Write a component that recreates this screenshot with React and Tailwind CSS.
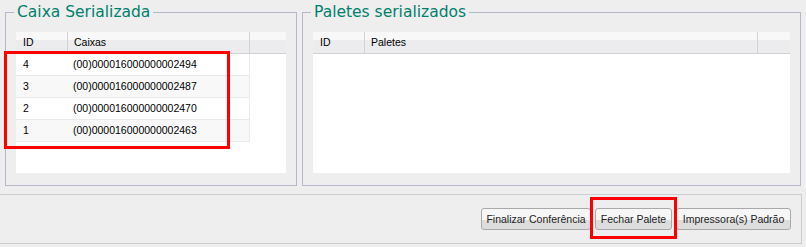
const caixas = [
  { id: 4, code: '(00)000016000000002494' },
  { id: 3, code: '(00)000016000000002487' },
  { id: 2, code: '(00)000016000000002470' },
  { id: 1, code: '(00)000016000000002463' },
];

function Group({ title, width, children }) {
  return (
    <fieldset className={`${width} h-[183px] border border-[#b5b7cc] px-[10px] pb-[11px]`}>
      <legend className="-ml-[2px] px-[3px] font-['DejaVu_Sans'] text-[15.5px] leading-[18px] text-[#00806c]">
        {title}
      </legend>
      {children}
    </fieldset>
  );
}

function HeaderCell({ children, className }) {
  return (
    <div className={`h-full flex items-center border-r border-[#d3d3d6] ${className}`}>
      {children}
    </div>
  );
}

function Button({ children, width }) {
  return (
    <button className={`${width} h-[22px] rounded-[3px] border border-[#a9a9a9] bg-[linear-gradient(#f6f6f6_0_55%,#dddddd_55%)] text-[#222] leading-none`}>
      {children}
    </button>
  );
}

export default function App() {
  return (
    <div className="relative w-[806px] h-[247px] overflow-hidden bg-[#eeeeee] font-['Liberation_Sans',Arial,sans-serif] text-[10.5px] text-black">
      <div className="flex gap-[5px] pl-[5px] pt-[3px]">
        <Group title="Caixa Serializada" width="w-[292px]">
          <div className="mt-[11px] h-[141px] bg-white">
            <div className="flex h-[22px] border-b border-[#d0d0d0] bg-[linear-gradient(#f8f8f8_0_40%,#ececee_40%)]">
              <HeaderCell className="w-[52px] pl-[7px]">ID</HeaderCell>
              <HeaderCell className="w-[182px] pl-[6px]">Caixas</HeaderCell>
              <div className="flex-1" />
            </div>
            {caixas.map((c, i) => (
              <div
                key={c.id}
                className={`flex h-[22px] w-[234px] items-center border-b border-r border-[#ebebeb] ${i % 2 ? 'bg-[#f8f8f8]' : 'bg-white'}`}
              >
                <div className="w-[52px] pl-[7px]">{c.id}</div>
                <div className="pl-[5px]">{c.code}</div>
              </div>
            ))}
          </div>
        </Group>

        <Group title="Paletes serializados" width="w-[499px]">
          <div className="mt-[11px] h-[141px] bg-white">
            <div className="flex h-[22px] border-b border-[#d0d0d0] bg-[linear-gradient(#f8f8f8_0_40%,#ececee_40%)]">
              <HeaderCell className="w-[52px] pl-[7px]">ID</HeaderCell>
              <HeaderCell className="w-[393px] pl-[6px]">Paletes</HeaderCell>
              <div className="flex-1" />
            </div>
          </div>
        </Group>
      </div>

      <div className="mt-[8px] flex h-[50px] w-[802px] justify-end gap-[4px] border-y border-r border-[#cdcdcd] pr-[10px] pt-[13px]">
        <Button width="w-[110px]">Finalizar Conferência</Button>
        <Button width="w-[77px]">Fechar Palete</Button>
        <Button width="w-[115px]">Impressora(s) Padrão</Button>
      </div>

      {/* annotation boxes */}
      <div className="absolute left-[4px] top-[51px] h-[98px] w-[226px] border-[3px] border-[#ff0000]" />
      <div className="absolute left-[590px] top-[197px] h-[42px] w-[87px] border-[3px] border-[#ff0000]" />
    </div>
  );
}
